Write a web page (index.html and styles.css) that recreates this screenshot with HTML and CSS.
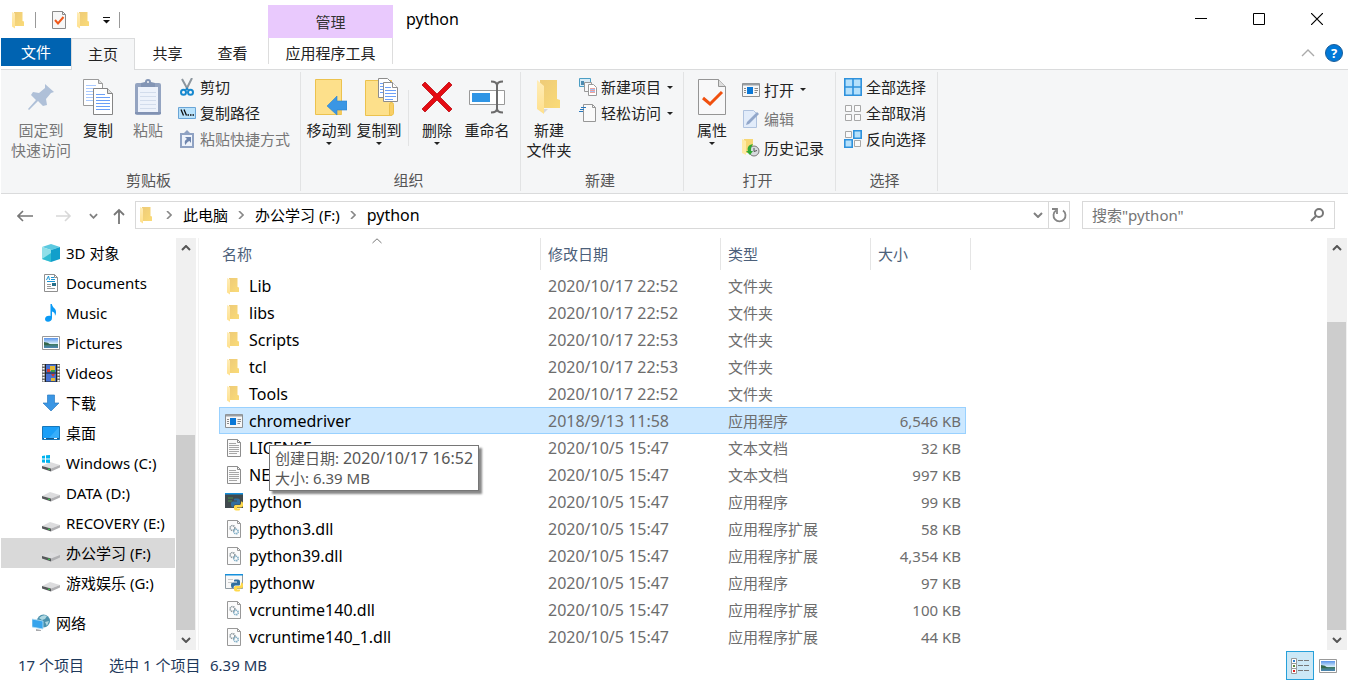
FILE: index.html
```html
<!DOCTYPE html>
<html lang="zh-CN">
<head>
<meta charset="utf-8">
<title>python</title>
<link rel="stylesheet" href="styles.css">
</head>
<body>
<svg class="defs" aria-hidden="true">
  <defs>
    <linearGradient id="gold" x1="0" y1="0" x2="1" y2="1"><stop offset="0" stop-color="#eecb78"/><stop offset="1" stop-color="#fadb78"/></linearGradient>
    <linearGradient id="flap" x1="0" y1="0" x2="0" y2="1"><stop offset="0" stop-color="#ffedb8"/><stop offset="1" stop-color="#ffe08c"/></linearGradient>
    <linearGradient id="sky" x1="0" y1="0" x2="0" y2="1"><stop offset="0" stop-color="#5a95ea"/><stop offset=".55" stop-color="#d5ecfa"/><stop offset=".6" stop-color="#3f7a5c"/><stop offset="1" stop-color="#4b86b8"/></linearGradient>
    <symbol id="folder" viewBox="0 0 18 18"><path d="M4 1h8.500v9l1.500.5V15H4z" fill="url(#gold)"/><path d="M2 1l3 1.500V17.500L2 15.500z" fill="url(#flap)"/></symbol>
    <symbol id="folder-big" viewBox="0 0 26 38"><path d="M4 2h17v19l3 1v8H4z" fill="url(#gold)"/><path d="M1 2l7 6v28l-7-5z" fill="url(#flap)"/><path d="M8 35l4-4H8z" fill="#d8d8d8"/></symbol>
    <symbol id="check" viewBox="0 0 16 18"><path d="M1.500.5h10l3 3v14h-13z" fill="#f7f7f7" stroke="#8b8b8b"/><path d="M11.500.5v3h3" fill="none" stroke="#8b8b8b"/><path d="M4 9l3 3.500L12.500 6" fill="none" stroke="#f0581a" stroke-width="2"/></symbol>
    <symbol id="check-big" viewBox="0 0 30 38"><path d="M1.500 1.500h20l7 7v28h-27z" fill="#f8f8f9" stroke="#959595"/><path d="M21.500 1.500v7h7" fill="#ddd" stroke="#959595"/><path d="M6 20l7 6 12-12" fill="none" stroke="#f0500f" stroke-width="3"/></symbol>
    <symbol id="pin" viewBox="0 0 28 28"><path d="M18 1l9 8-3 1-5 6 1 6-4 1-5-5-9 9-1-1 8-9-5-5 2-3 6 1 6-5z" fill="#afc0d8"/></symbol>
    <symbol id="pages" viewBox="0 0 32 38"><g fill="#fff" stroke="#9b9b9b"><path d="M1.500 1.500h15l4 4v22h-19z"/><path d="M16.500 1.500v4h4" fill="#ddd"/></g><path d="M4 7.500h10M4 10.500h14M4 13.500h14M4 16.500h7M4 19.500h7M4 22.500h7" stroke="#a9c9ff"/><g fill="#fff" stroke="#858585"><path d="M11.500 10.500h14l5 5v21h-19z"/><path d="M25.500 10.500v5h5" fill="#ddd"/></g><path d="M14 16.500h9M14 19.500h14M14 22.500h14M14 25.500h14M14 28.500h14M14 31.500h14" stroke="#6a9ff8"/></symbol>
    <symbol id="clipboard" viewBox="0 0 28 38"><rect x="1" y="5" width="26" height="32" rx="2" fill="#94a4c1"/><path d="M1 35h26" stroke="#8192b3" stroke-width="2"/><path d="M4 9h20v25H4z" fill="#edf2fb"/><path d="M6 14.500h16M6 18.500h16M6 22.500h16M6 26.500h16M6 30.500h16" stroke="#d2dcec"/><path d="M7 5l4-1a3 3 0 0 1 6 0l4 1v4H7z" fill="#8395b5"/><circle cx="14" cy="4" r="1" fill="#f5f6f8"/></symbol>
    <symbol id="scissors" viewBox="0 0 14 18"><path d="M2 1l6 11M12 0L6 12" stroke="#8d969e" stroke-width="2"/><circle cx="3.500" cy="14.200" r="2.500" fill="none" stroke="#1688cf" stroke-width="2"/><circle cx="10.500" cy="14.200" r="2.500" fill="none" stroke="#1688cf" stroke-width="2"/><path d="M5 12l2-3 2 3z" fill="#1688cf"/></symbol>
    <symbol id="path" viewBox="0 0 18 12"><path d="M.5.500h17v11H.5z" fill="#b9e2fb" stroke="#6aa5d6"/><path d="M3 2.500l2.500 6M6 2.500l2.500 6" stroke="#111" stroke-width="1.300"/><path d="M9.500 8h1.500M12 8h1.500M14.500 8H16" stroke="#111" stroke-width="1.500"/></symbol>
    <symbol id="clip-link" viewBox="0 0 14 18"><path d="M0 3h14v15H0z" fill="#8fa2c3"/><path d="M2 5h10v11H2z" fill="#eef3fb"/><path d="M4 3l3-3 3 3v2H4z" fill="#8fa2c3"/><path d="M5 7h6v6L9.500 11C7 12 6.500 13 5.500 15 4 12 5 10 7 9z" fill="#6f86ae"/></symbol>
    <symbol id="move" viewBox="-3 0 36 38"><path d="M1.500 1.500h26v35h-26z" fill="#fde08b" stroke="#ecc24e"/><path d="M23 24h5v12h-6z" fill="#f5c95c"/><path d="M13 28l10-10v5h10v9H23v5z" fill="#3a96e4" stroke="#2b83cf" stroke-width=".6"/></symbol>
    <symbol id="copyto" viewBox="-3 1 37 38"><path d="M1.500 3.500h26v35h-26z" fill="#fde08b" stroke="#ecc24e"/><path d="M25.500 38.500v-11q0-2 2-2t2 2v9q0 2-4 2z" fill="#f9cf66" stroke="#ecc24e"/><g fill="#fff" stroke="#8d8d8d"><path d="M14.500 1.500h9l4 4v15h-13z"/><path d="M19.500 5.500h9l5 5v14h-14z"/><path d="M28.500 5.500v5h5"/></g><path d="M16 6.500h3M16 9.500h3M16 12.500h3M16 15.500h3M21 10.500h6M21 13.500h11M21 16.500h11M21 19.500h11M21 22.500h8" stroke="#6ca0f8"/></symbol>
    <symbol id="delete" viewBox="0 0 32 32"><path d="M1 4l3-3 12 12L28 1l3 3-12 12 12 12-3 3-12-12L4 31l-3-3 12-12z" fill="#e50b13" stroke="#b90a10" stroke-width=".8"/></symbol>
    <symbol id="rename" viewBox="0 0 38 34"><path d="M1.500 10.500h35v14h-35z" fill="#fff" stroke="#999"/><path d="M4 13h18v9H4z" fill="#2f95e5"/><path d="M23 1.500c4 0 6 1 6 4v23c0 3-2 4-6 4M35 1.500c-4 0-6 1-6 4v23c0 3 2 4 6 4" fill="none" stroke="#6b6b6b" stroke-width="2"/></symbol>
    <symbol id="newitem" viewBox="0 0 18 18"><path d="M.5.500h11v8H.5z" fill="#d9ecf6" stroke="#4c9ec4"/><path d="M2 3h3v4H2z" fill="#4c8bb0"/><path d="M5.500 4.500h7v9h-7z" fill="#f8f8f8" stroke="#999"/><path d="M9.500 6.500h5l3 3v8h-8z" fill="#fff" stroke="#999"/><path d="M11 10.500h5M11 12.500h5M11 14.500h5" stroke="#f0a29a"/><path d="M11 11.500h5M11 13.500h5" stroke="#a3bff0"/></symbol>
    <symbol id="easy" viewBox="0 0 18 18"><path d="M4.500.5h9l3 3v14h-12z" fill="#fafafa" stroke="#979797"/><path d="M13.500.5v3h3" fill="none" stroke="#979797"/><path d="M2 3.500h5M1 5.500h4M0 7.500h4" stroke="#2878bd"/></symbol>
    <symbol id="app" viewBox="0 0 18 14"><path d="M.5.500h17v13H.5z" fill="#f7f7f7" stroke="#8b8f92"/><path d="M1 1.500h16" stroke="#9a9fa3" stroke-width="2"/><path d="M5 4h6v7H5z" fill="#0a78d7"/><path d="M2 5.500h2M2 7.500h2M2 9.500h2M12.500 5.500H16M12.500 7.500H16M12.500 9.500H15" stroke="#8a8a8a"/></symbol>
    <symbol id="edit" viewBox="0 0 18 18"><path d="M1.500.5h10l3 3v14h-13z" fill="#e2ecfa" stroke="#b0c3df"/><path d="M4 15l1-3L15 2l2 2L7 14z" fill="#92a7ca"/></symbol>
    <symbol id="history" viewBox="0 0 18 18"><path d="M2 0h9v14H2z" fill="#f7d774"/><path d="M0 0l4 2v14l-4-2z" fill="#ffeaa5"/><circle cx="12" cy="12" r="5" fill="#d7dade" stroke="#777"/><path d="M12 9v3.500l3-1" fill="none" stroke="#555"/><path d="M11 5C6 6 5 9 6 12H4l4 4 3-4H9c0-3 0-4 2-7z" fill="#30a935"/></symbol>
    <symbol id="all" viewBox="0 0 18 18"><path d="M.8.800h16.400v16.400H.8zM9 1v16M1 9h16" fill="#b5e0fb" stroke="#2e91dc" stroke-width="1.600"/></symbol>
    <symbol id="none" viewBox="0 0 18 18"><path d="M1.500 1.500h6v6h-6zM10.500 1.500h6v6h-6zM1.500 10.500h6v6h-6zM10.500 10.500h6v6h-6z" fill="#fafafa" stroke="#a7a7a7"/></symbol>
    <symbol id="invert" viewBox="0 0 18 18"><path d="M1.500 1.500h6v6h-6zM10.500 10.500h6v6h-6z" fill="#fafafa" stroke="#a7a7a7"/><path d="M9.800.8h7.400v7.400H9.800zM.8 9.800h7.400v7.400H.8z" fill="#b5e0fb" stroke="#2e91dc" stroke-width="1.600"/></symbol>
    <symbol id="cube" viewBox="0 0 18 18"><path d="M9 0l9 3-9 3-9-3z" fill="#5cc9e0"/><path d="M0 3l9 3v12l-9-3z" fill="#8fdfe8"/><path d="M18 3L9 6v12l9-3z" fill="#119fcb"/><path d="M0 15l9-6v9z" fill="#2fbcd2"/></symbol>
    <symbol id="doc" viewBox="0 0 18 18"><path d="M2.500.5h10l3 3v14h-13z" fill="#fff" stroke="#8f8f8f"/><path d="M12.500.5v3h3" fill="none" stroke="#8f8f8f"/><path d="M4.500 6L6.500 2 7.500 6M9 3.500h3M9 5.500h4M5 7.500h8" fill="none" stroke="#1c94d2"/><path d="M5 10.500h4M5 12.500h4M5 14.500h8" stroke="#999"/><path d="M10 9h4v3h-4z" fill="#27708a"/></symbol>
    <symbol id="music" viewBox="0 0 18 18"><path d="M8.500 0h1.300c.7 4 4.700 4.500 4.200 8.500 0 2-.8 2.500-1 3.500.2-3-1.200-4-3-4.500V14c0 2.500-2 3.700-4 3.700S3 16.500 3 15c0-2.500 3-3.800 5.500-3z" fill="#0a9af5"/></symbol>
    <symbol id="picture" viewBox="0 0 18 14"><path d="M.5.500h17v13H.5z" fill="#fff" stroke="#999"/><path d="M2 2h14v10H2z" fill="url(#sky)"/><path d="M2 6q4 0 7 3H2z" fill="#35684c"/></symbol>
    <symbol id="video" viewBox="0 0 18 18"><path d="M0 0h18v18H0z" fill="#6c6c6c"/><path d="M1.500 1v17M16.500 1v17" stroke="#fff" stroke-width="2" stroke-dasharray="1.500 1.500"/><path d="M3 0h12v18H3z" fill="#222"/><path d="M4 .5h10v8H4zM4 9.500h10v8H4z" fill="#4771d2"/><path d="M8 2h5v5H8zM9 14h4v3H9z" fill="#e3b934"/><path d="M5 5h3v3H5zM9 10h4l-2 3z" fill="#d13c32"/><path d="M9 6h4v2H9z" fill="#3b9c43"/></symbol>
    <symbol id="download" viewBox="0 0 18 18"><path d="M5.500 1h7v8H17l-8 8-8-8h4.500z" fill="#3a96e4" stroke="#2c7bc2" stroke-width=".7"/></symbol>
    <symbol id="desktop" viewBox="0 0 18 14"><path d="M.5.500h17v13H.5z" fill="#1a9ff8" stroke="#1677ba"/><path d="M17 1L7 12h10z" fill="#37aefb"/><path d="M1 12.500h16" stroke="#175b8e"/><path d="M2 12.500h2M12 12.500h3" stroke="#fff"/></symbol>
    <symbol id="drive" viewBox="0 0 18 18"><path d="M0 12l8-4 10 3-9 3.500z" fill="#dcdcde"/><path d="M9 14.500l9-3.500v2.500L9 17.500z" fill="#b0b0b3"/><path d="M0 12l9 2.500v3L0 14.500z" fill="#55585a"/><path d="M6 14.500l2 .6v1l-2-.6z" fill="#35d14c"/></symbol>
    <symbol id="windrive" viewBox="0 0 18 18"><path d="M0 12l8-4 10 3-9 3.500z" fill="#dcdcde"/><path d="M9 14.500l9-3.500v2.500L9 17.500z" fill="#b0b0b3"/><path d="M0 12l9 2.500v3L0 14.500z" fill="#55585a"/><path d="M6 14.500l2 .6v1l-2-.6z" fill="#35d14c"/><path d="M0 2l3-.5v3H0zM4 1.300L8 1v3.500H4zM0 5.500h3v3.300L0 8.500zM4 5.500h4V9l-4-.3z" fill="#00b3ee"/></symbol>
    <symbol id="network" viewBox="0 0 18 18"><circle cx="11.500" cy="7" r="6.500" fill="#4a91ad"/><path d="M7 4q4-4 8-2l-2 3-3 1zM13 8l4-1-2 5z" fill="#aed7e1"/><path d="M0 5l11 2v8L0 13z" fill="#37a4ec" stroke="#b6e0f5" stroke-width=".8"/><path d="M4 15l5 1v1H4z" fill="#a9aaad"/></symbol>
    <symbol id="text" viewBox="0 0 18 18"><path d="M2.500.5h10l3 3v14h-13z" fill="#fbfbfb" stroke="#8d8d8d"/><path d="M12.500.5v3h3" fill="none" stroke="#8d8d8d"/><path d="M4 4.500h7M4 6.500h10M4 8.500h10M4 10.500h10M4 12.500h10M4 14.500h8" stroke="#a7a7a7"/></symbol>
    <symbol id="dll" viewBox="0 0 18 18"><path d="M2.500.5h10l3 3v14h-13z" fill="#fbfbfb" stroke="#989898"/><path d="M12.500.5v3h3" fill="none" stroke="#989898"/><circle cx="7.500" cy="8" r="2.400" fill="none" stroke="#8b969c" stroke-width="1.600" stroke-dasharray="1.200 .6"/><circle cx="11" cy="11.500" r="2.200" fill="none" stroke="#79a9c2" stroke-width="1.600" stroke-dasharray="1.200 .6"/></symbol>
    <symbol id="snake" viewBox="0 0 12 12"><path d="M4 0h3q2 0 2 2v3q0 1-1 1H4Q2.500 6 2.500 8.500H1.500Q0 8.500 0 6V5q0-2 2-2h4V2H3V1q0-1 1-1z" fill="#306f9f"/><path d="M8 12H5q-2 0-2-2V8q0-1.500 1.500-1.500h4q1.500 0 1.500-2V3h.5Q12 3 12 5v2q0 2-2 2H6v1h3v1q0 1-1 1z" fill="#ffd94b"/></symbol>
    <symbol id="python" viewBox="0 0 18 18"><path d="M0 0h18v15H0z" fill="#414a4e"/><path d="M0 0h18v1.500H0z" fill="#1590dd"/><path d="M3 5h5M3 8h4" stroke="#4a8d4d"/><use href="#snake" x="6" y="5" width="12" height="13"/></symbol>
    <symbol id="pythonw" viewBox="0 0 18 18"><path d="M.5.500h17v14H.5z" fill="#f8f8f8" stroke="#8f9ba3"/><path d="M0 0h18v1.500H0z" fill="#1590dd"/><path d="M3 5.500h5M3 8.500h4" stroke="#c9c9c9"/><use href="#snake" x="6" y="5" width="12" height="13"/></symbol>
    <symbol id="up" viewBox="0 0 10 6"><path d="M1 5l4-4 4 4" fill="none" stroke="currentColor" stroke-width="2"/></symbol>
    <symbol id="down" viewBox="0 0 10 6"><path d="M1 1l4 4 4-4" fill="none" stroke="currentColor" stroke-width="2"/></symbol>
    <symbol id="crumb" viewBox="0 0 6 8"><path d="M1 0l4 4-4 4" fill="none" stroke="#888" stroke-width="1.600"/></symbol>
  </defs>
</svg>

<header class="titlebar">
  <div class="quick">
    <svg class="i18"><use href="#folder"/></svg><span class="bar"></span>
    <button class="plain" aria-label="属性"><svg class="i18"><use href="#check"/></svg></button>
    <button class="plain" aria-label="新建文件夹"><svg class="i18"><use href="#folder"/></svg></button>
    <button class="plain custom" aria-label="自定义快速访问工具栏"><svg width="8" height="7"><path d="M1 .5h7" stroke="#111"/><path d="M1 3h7L4.500 6.500z" fill="#111"/></svg></button>
    <span class="bar"></span>
  </div>
  <div class="context">管理</div>
  <h1 class="title">python</h1>
  <div class="controls">
    <button aria-label="最小化"><svg width="12" height="12"><path d="M0 5.500h12" stroke="#000"/></svg></button>
    <button aria-label="最大化"><svg width="12" height="12"><path d="M.5.500h11v11H.5z" fill="none" stroke="#000"/></svg></button>
    <button aria-label="关闭"><svg width="12" height="12"><path d="M0 0l12 12M12 0L0 12" stroke="#000" stroke-width="1.200"/></svg></button>
  </div>
</header>

<nav class="tabs">
  <button class="tab file">文件</button>
  <button class="tab active">主页</button>
  <button class="tab">共享</button>
  <button class="tab">查看</button>
  <button class="tab tools">应用程序工具</button>
  <span class="help-area">
    <button class="plain" aria-label="折叠功能区"><svg width="14" height="8"><path d="M1 7l6-6 6 6" fill="none" stroke="#aaa" stroke-width="1.400"/></svg></button>
    <button class="help" aria-label="帮助">?</button>
  </span>
</nav>

<section class="ribbon">
  <div class="group g-clip">
    <div class="tools-row">
      <button class="big w74 off"><svg width="28" height="38" class="pin"><use href="#pin"/></svg><span>固定到<br>快速访问</span></button>
      <button class="big w40"><svg width="32" height="38"><use href="#pages"/></svg><span>复制</span></button>
      <button class="big w60 off"><svg width="28" height="38"><use href="#clipboard"/></svg><span>粘贴</span></button>
      <div class="stack">
        <button><svg class="i18"><use href="#scissors"/></svg>剪切</button>
        <button><svg class="i18"><use href="#path"/></svg>复制路径</button>
        <button class="off"><svg class="i18"><use href="#clip-link"/></svg>粘贴快捷方式</button>
      </div>
    </div>
    <div class="caption">剪贴板</div>
  </div>
  <div class="group g-org">
    <div class="tools-row">
      <button class="big w50"><svg width="36" height="38"><use href="#move"/></svg><span>移动到</span><i class="caret"></i></button>
      <button class="big w50"><svg width="37" height="38"><use href="#copyto"/></svg><span>复制到</span><i class="caret"></i></button>
      <span class="divider"></span>
      <button class="big w50"><svg width="32" height="38"><use href="#delete"/></svg><span>删除</span><i class="caret"></i></button>
      <button class="big w50"><svg width="38" height="38"><use href="#rename"/></svg><span>重命名</span></button>
    </div>
    <div class="caption">组织</div>
  </div>
  <div class="group g-new">
    <div class="tools-row">
      <button class="big w50"><svg width="26" height="38"><use href="#folder-big"/></svg><span>新建<br>文件夹</span></button>
      <div class="stack">
        <button><svg class="i18"><use href="#newitem"/></svg>新建项目<i class="caret"></i></button>
        <button><svg class="i18"><use href="#easy"/></svg>轻松访问<i class="caret"></i></button>
      </div>
    </div>
    <div class="caption">新建</div>
  </div>
  <div class="group g-open">
    <div class="tools-row">
      <button class="big w50"><svg width="30" height="38"><use href="#check-big"/></svg><span>属性</span><i class="caret"></i></button>
      <div class="stack loose">
        <button><svg class="i18"><use href="#app"/></svg>打开<i class="caret"></i></button>
        <button class="off"><svg class="i18"><use href="#edit"/></svg>编辑</button>
        <button><svg class="i18"><use href="#history"/></svg>历史记录</button>
      </div>
    </div>
    <div class="caption">打开</div>
  </div>
  <div class="group g-select">
    <div class="tools-row">
      <div class="stack">
        <button><svg class="i18"><use href="#all"/></svg>全部选择</button>
        <button><svg class="i18"><use href="#none"/></svg>全部取消</button>
        <button><svg class="i18"><use href="#invert"/></svg>反向选择</button>
      </div>
    </div>
    <div class="caption">选择</div>
  </div>
</section>

<div class="address-row">
  <div class="nav">
    <button class="plain" aria-label="后退"><svg width="16" height="12"><path d="M6 1L1 6l5 5M1 6h15" fill="none" stroke="#777" stroke-width="1.600"/></svg></button>
    <button class="plain" aria-label="前进"><svg width="16" height="12"><path d="M9 1l5 5-5 5M14 6H0" fill="none" stroke="#d8d8d8" stroke-width="1.600"/></svg></button>
    <button class="plain" aria-label="最近位置"><svg width="9" height="6" class="grey"><use href="#down"/></svg></button>
    <button class="plain" aria-label="上移"><svg width="12" height="16"><path d="M1 7l5-5 5 5M6 2v14" fill="none" stroke="#777" stroke-width="1.800"/></svg></button>
  </div>
  <div class="address">
    <svg class="i18"><use href="#folder"/></svg>
    <svg class="crumb"><use href="#crumb"/></svg><button class="plain">此电脑</button>
    <svg class="crumb"><use href="#crumb"/></svg><button class="plain">办公学习 (F:)</button>
    <svg class="crumb"><use href="#crumb"/></svg><button class="plain latin">python</button>
    <button class="plain history" aria-label="以前的位置"><svg width="10" height="6" class="grey"><use href="#down"/></svg></button>
    <button class="plain refresh" aria-label="刷新"><svg width="16" height="16"><path d="M5 3.500A6 6 0 1 0 12 3.500" fill="none" stroke="#858585" stroke-width="1.800"/><path d="M1 2h5v5" fill="none" stroke="#858585" stroke-width="1.800"/></svg></button>
  </div>
  <div class="search">
    <input type="text" aria-label="搜索" placeholder='搜索"python"'>
    <button class="plain" aria-label="开始搜索"><svg width="14" height="14"><circle cx="9" cy="5" r="4" fill="none" stroke="#777" stroke-width="2"/><path d="M6 8l-5 5" stroke="#777" stroke-width="2"/></svg></button>
  </div>
</div>

<main class="main">
  <nav class="tree">
    <a href="#"><svg class="i18"><use href="#cube"/></svg>3D 对象</a>
    <a href="#"><svg class="i18"><use href="#doc"/></svg>Documents</a>
    <a href="#"><svg class="i18"><use href="#music"/></svg>Music</a>
    <a href="#"><svg class="i18"><use href="#picture"/></svg>Pictures</a>
    <a href="#"><svg class="i18"><use href="#video"/></svg>Videos</a>
    <a href="#"><svg class="i18"><use href="#download"/></svg>下载</a>
    <a href="#"><svg class="i18"><use href="#desktop"/></svg>桌面</a>
    <a href="#"><svg class="i18"><use href="#windrive"/></svg>Windows (C:)</a>
    <a href="#"><svg class="i18"><use href="#drive"/></svg>DATA (D:)</a>
    <a href="#"><svg class="i18"><use href="#drive"/></svg>RECOVERY (E:)</a>
    <a href="#" class="current"><svg class="i18"><use href="#drive"/></svg>办公学习 (F:)</a>
    <a href="#"><svg class="i18"><use href="#drive"/></svg>游戏娱乐 (G:)</a>
    <a href="#" class="root"><svg class="i18"><use href="#network"/></svg>网络</a>
  </nav>
  <div class="scroll tree-scroll"><button class="plain" aria-label="向上滚动"><svg width="10" height="6"><use href="#up"/></svg></button><span class="space"></span><span class="thumb"></span><button class="plain" aria-label="向下滚动"><svg width="10" height="6"><use href="#down"/></svg></button></div>
  <div class="files">
    <table>
      <thead><tr><th class="c-name">名称<svg class="sort" width="10" height="6"><path d="M.5 5L5 .8 9.500 5" fill="none" stroke="#777"/></svg></th><th class="c-date">修改日期</th><th class="c-type">类型</th><th class="c-size">大小</th></tr></thead>
      <tbody>
        <tr><td><span class="name"><svg class="i18"><use href="#folder"/></svg>Lib</span></td><td class="date">2020/10/17 22:52</td><td>文件夹</td><td></td></tr>
        <tr><td><span class="name"><svg class="i18"><use href="#folder"/></svg>libs</span></td><td class="date">2020/10/17 22:52</td><td>文件夹</td><td></td></tr>
        <tr><td><span class="name"><svg class="i18"><use href="#folder"/></svg>Scripts</span></td><td class="date">2020/10/17 22:53</td><td>文件夹</td><td></td></tr>
        <tr><td><span class="name"><svg class="i18"><use href="#folder"/></svg>tcl</span></td><td class="date">2020/10/17 22:53</td><td>文件夹</td><td></td></tr>
        <tr><td><span class="name"><svg class="i18"><use href="#folder"/></svg>Tools</span></td><td class="date">2020/10/17 22:52</td><td>文件夹</td><td></td></tr>
        <tr class="selected"><td><span class="name"><svg class="i18"><use href="#app"/></svg>chromedriver</span><div class="tooltip" role="tooltip">创建日期: <span class="latin">2020/10/17 16:52</span><br>大小: 6.39 MB</div></td><td class="date">2018/9/13 11:58</td><td>应用程序</td><td>6,546 KB</td></tr>
        <tr><td><span class="name"><svg class="i18"><use href="#text"/></svg>LICENSE</span></td><td class="date">2020/10/5 15:47</td><td>文本文档</td><td>32 KB</td></tr>
        <tr><td><span class="name"><svg class="i18"><use href="#text"/></svg>NEWS</span></td><td class="date">2020/10/5 15:47</td><td>文本文档</td><td>997 KB</td></tr>
        <tr><td><span class="name"><svg class="i18"><use href="#python"/></svg>python</span></td><td class="date">2020/10/5 15:47</td><td>应用程序</td><td>99 KB</td></tr>
        <tr><td><span class="name"><svg class="i18"><use href="#dll"/></svg>python3.dll</span></td><td class="date">2020/10/5 15:47</td><td>应用程序扩展</td><td>58 KB</td></tr>
        <tr><td><span class="name"><svg class="i18"><use href="#dll"/></svg>python39.dll</span></td><td class="date">2020/10/5 15:47</td><td>应用程序扩展</td><td>4,354 KB</td></tr>
        <tr><td><span class="name"><svg class="i18"><use href="#pythonw"/></svg>pythonw</span></td><td class="date">2020/10/5 15:47</td><td>应用程序</td><td>97 KB</td></tr>
        <tr><td><span class="name"><svg class="i18"><use href="#dll"/></svg>vcruntime140.dll</span></td><td class="date">2020/10/5 15:47</td><td>应用程序扩展</td><td>100 KB</td></tr>
        <tr><td><span class="name"><svg class="i18"><use href="#dll"/></svg>vcruntime140_1.dll</span></td><td class="date">2020/10/5 15:47</td><td>应用程序扩展</td><td>44 KB</td></tr>
      </tbody>
    </table>
  </div>
  <div class="scroll file-scroll"><button class="plain" aria-label="向上滚动"><svg width="10" height="6"><use href="#up"/></svg></button><span class="space"></span><span class="thumb"></span><button class="plain" aria-label="向下滚动"><svg width="10" height="6"><use href="#down"/></svg></button></div>
</main>

<footer class="status">
  <span class="count">17 个项目</span>
  <span class="picked">选中 1 个项目</span>
  <span class="total">6.39 MB</span>
  <div class="views">
    <button class="on" aria-label="详细信息"><svg width="18" height="16"><path d="M.5.500h5v5h-5zM.5 5.500h5v5h-5zM.5 10.500h5v5h-5z" fill="#fff" stroke="#999"/><path d="M2 2h2v2H2z" fill="#2f80cf"/><path d="M2 7h2v2H2z" fill="#5a8a3c"/><path d="M2 12h2v2H2z" fill="#d22"/><path d="M7 2.500h5M13 2.500h5M7 7.500h5M13 7.500h5M7 12.500h5M13 12.500h5" stroke="#777"/></svg></button>
    <button aria-label="大图标"><svg width="18" height="14"><use href="#picture"/></svg></button>
  </div>
</footer>
</body>
</html>
```
FILE: styles.css
```css
* { box-sizing: border-box; }
body {
  margin: 0;
  padding-left: 1px;
  min-height: 100vh;
  display: flex;
  flex-direction: column;
  background: #fff;
  color: #000;
  font: 15px/20px "Noto Sans", "Noto Sans CJK SC", sans-serif;
}
button, input { font: inherit; color: inherit; }
button { margin: 0; padding: 0; border: 0; background: none; white-space: nowrap; }
svg { display: block; flex: none; }
.defs { position: absolute; width: 0; height: 0; }
.i18 { width: 18px; height: 18px; }
.plain { display: flex; align-items: center; justify-content: center; }
.grey { color: #808080; }
.address .latin, .tooltip .latin { font-size: 16px; }

.titlebar { display: flex; height: 38px; }
.quick { display: flex; align-items: center; width: 267px; padding: 2px 0 0 9px; gap: 7px; }
.quick .bar { width: 1px; height: 16px; background: #999; margin-right: 7px; }
.quick .custom { width: 12px; }
.context { width: 125px; margin-top: 5px; background: #e9c9fd; color: #333; line-height: 34px; text-align: center; }
.title { margin: 0 0 0 13px; font-size: 16px; font-weight: 400; line-height: 38px; }
.controls { display: flex; margin-left: auto; padding-right: 2px; }
.controls button { width: 58px; display: flex; align-items: center; justify-content: center; }

.tabs { display: flex; height: 32px; border-bottom: 1px solid #dadbdc; color: #222; }
.tab { width: 65px; height: 30px; }
.tab.file { width: 70px; height: 28px; background: #0063b1; color: #fff; }
.tab.active { width: 64px; height: 32px; padding-bottom: 2px; background: #f5f6f7; border: 1px solid #dadbdc; border-bottom: 0; }
.tab.tools { width: 125px; height: 26px; margin-left: 3px; padding-top: 4px; border: solid #ddd; border-width: 0 1px; }
.help-area { display: flex; align-items: center; gap: 10px; height: 30px; margin-left: auto; padding-right: 5px; }
.help { width: 18px; height: 18px; border-radius: 50%; background: #0078d7; border: 1px solid #1a5d99; color: #fff; font-weight: 700; font-size: 13px; line-height: 16px; }

.ribbon { display: flex; min-height: 124px; padding: 2px 0; background: #f5f6f7; border-bottom: 1px solid #dadbdc; color: #222; }
.group { display: flex; flex-direction: column; border-right: 1px solid #e2e3e4; }
.g-clip { width: 300px; }
.g-org { width: 220px; }
.g-new { width: 163px; }
.g-open { width: 152px; }
.g-select { width: 102px; }
.tools-row { display: flex; flex: 1; padding-left: 3px; }
.g-select .tools-row { padding-left: 8px; }
.caption { height: 20px; margin-right: 4px; color: #555; line-height: 18px; text-align: center; }
.big { display: flex; flex-direction: column; align-items: center; padding-top: 6px; }
.big span { margin-top: 4px; }
.big .caret { margin-top: 2px; }
.w40 { width: 40px; }
.w50 { width: 50px; }
.w60 { width: 60px; }
.w74 { width: 74px; }
.off { color: #777; }
.caret { flex: none; border: solid transparent; border-width: 3px 3px 0; border-top-color: #222; height: 0; width: 0; }
.stack { display: flex; flex-direction: column; padding-top: 2px; }
.stack button { display: flex; align-items: center; height: 26px; gap: 4px; }
.stack .caret { margin-left: 2px; }
.loose { padding-top: 3px; margin-left: 5px; }
.loose button { height: 29px; }
.g-new .stack { margin-left: 5px; }
.divider { width: 1px; height: 56px; margin: 18px 3px 0 4px; background: #e2e3e4; }

.address-row { display: flex; height: 44px; padding-top: 7px; }
.nav { display: flex; width: 134px; height: 30px; padding-left: 16px; align-items: center; }
.nav .plain:nth-child(2) { margin-left: 23px; }
.nav .plain:nth-child(3) { margin-left: 17px; }
.nav .plain:nth-child(4) { margin-left: 15px; }
.address { display: flex; flex: 1; align-items: center; height: 28px; padding-left: 2px; border: 1px solid #d9d9d9; }
.crumb { width: 6px; height: 8px; margin: 0 11px 0 10px; }
.address .history { width: 20px; margin-left: auto; }
.address .refresh { width: 21px; height: 26px; border-left: 1px solid #d9d9d9; }
.search { display: flex; width: 253px; height: 28px; margin: 0 13px 0 12px; padding: 0 10px 0 9px; border: 1px solid #d9d9d9; }
.search input { flex: 1; min-width: 0; padding: 0; border: 0; outline: 0; background: none; }
.search input::placeholder { color: #757575; opacity: 1; }

.main { display: flex; flex: 1; min-height: 412px; }
.tree { width: 175px; }
.tree a { display: flex; align-items: center; gap: 6px; height: 30px; padding-left: 41px; color: #000; text-decoration: none; white-space: nowrap; }
.tree .current { width: 174px; background: #d9d9d9; }
.tree .root { margin-top: 10px; padding-left: 31px; }
.scroll { display: flex; flex-direction: column; width: 20px; background: #f0f0f0; color: #555; }
.scroll .plain { height: 20px; }
.thumb { width: 19px; background: #cdcdcd; }
.tree-scroll .space { flex: 177; }
.tree-scroll .thumb { flex: 195; }
.file-scroll { margin-right: 1px; }
.file-scroll .space { flex: 64; }
.file-scroll .thumb { flex: 308; }
.files { flex: 1; min-width: 0; margin-left: 2px; padding-left: 20px; border-left: 1px solid #f2f2f2; }
table { table-layout: fixed; width: 747px; border-collapse: collapse; }
th { position: relative; height: 34px; padding: 0 0 2px 7px; color: #4c607a; font-weight: 400; text-align: left; }
th::after { content: ""; position: absolute; right: 0; top: 0; width: 1px; height: 32px; background: #e5e5e5; }
.c-name { width: 322px; padding-left: 3px; }
.c-date { width: 180px; }
.c-type { width: 150px; }
.c-size { width: 95px; }
.c-size::after { right: -5px; }
.sort { position: absolute; left: 153px; top: 0; }
td { height: 27px; padding: 0 0 0 7px; color: #6d6d6d; white-space: nowrap; }
td:first-child { position: relative; padding-left: 6px; color: #000; }
td:last-child { padding: 0 5px 0 0; text-align: right; }
.date { font-size: 16px; }
.name { display: flex; align-items: center; gap: 6px; font-size: 16px; }
.selected { background: #cce8ff; outline: 1px solid #99d1ff; outline-offset: -1px; }
.tooltip { position: absolute; z-index: 1; left: 50px; top: 38px; padding: 2px 5px; background: #fff; border: 1px solid #767676; box-shadow: 3px 3px 2px #888; color: #575757; }

.status { display: flex; height: 31px; padding-left: 17px; color: #1e395b; line-height: 30px; }
.count { width: 91px; }
.picked { width: 101px; }
.views { display: flex; margin-left: auto; padding: 1px 11px 0 0; gap: 5px; }
.views button { display: flex; align-items: center; justify-content: center; height: 29px; }
.views .on { width: 28px; background: #cce8f6; border: 1px solid #26a0da; }
```
